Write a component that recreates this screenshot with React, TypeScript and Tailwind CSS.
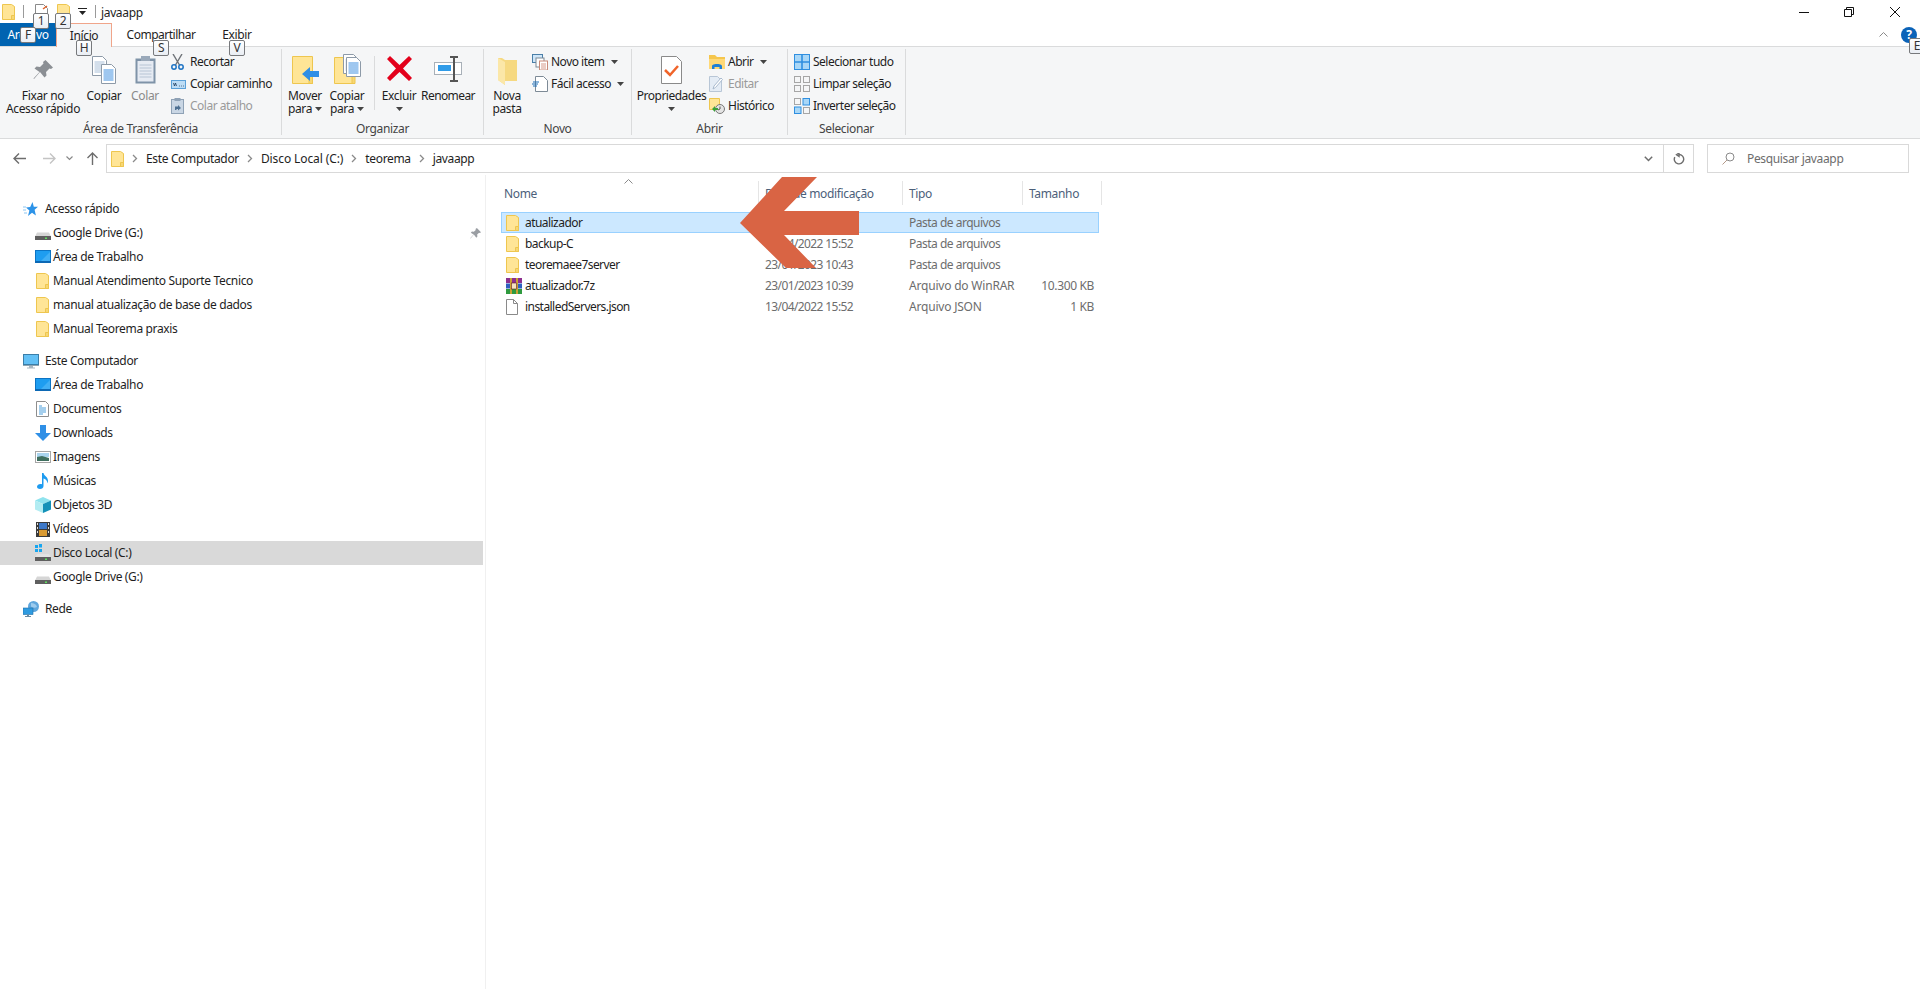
import React from 'react';

const FONT = "font-['Noto_Sans','Open_Sans',sans-serif]";

// icones desenhados a mao
const PastaPequena = ({ className = '' }: { className?: string }) => (
    <svg width="13" height="16" viewBox="0 0 13 16" className={className}>
        <path d="M.5.5h9l3 2v13H.5z" fill="#ffe596" stroke="#eec64f" />
        <path d="M9.5 11.5h3v4h-3z" fill="#f7d774" stroke="#eec64f" />
    </svg>
);

const Drive = () => (
    <svg width="16" height="16" viewBox="0 0 16 16">
        <path d="M2 7.5h12l2 4H0z" fill="#d6d6d6" />
        <rect x="0" y="11" width="16" height="4" fill="#5f5f5f" />
        <rect x="10" y="12.5" width="2" height="1.5" fill="#5fe05f" />
    </svg>
);

const DiscoC = () => (
    <svg width="16" height="18" viewBox="0 0 16 18">
        <path d="M0 1h3v3H0zM4 0h3v3.5H4zM0 5h3v3H0zM4 5h3v3H4z" fill="#18a6f0" />
        <path d="M2 10h12l2 3H0z" fill="#e3e3e3" />
        <rect x="0" y="13" width="16" height="4" fill="#5f5f5f" />
        <rect x="10" y="14.5" width="2" height="1.5" fill="#5fe05f" />
    </svg>
);

const AreaTrabalho = () => (
    <svg width="16" height="14" viewBox="0 0 16 14">
        <rect x=".5" y=".5" width="15" height="12" fill="#1e9df0" stroke="#0c74c4" />
        <rect x="0" y="11" width="16" height="2" fill="#0c68b4" />
        <path d="M6 11 15 2v9z" fill="#41aff5" />
    </svg>
);

const Documentos = () => (
    <svg width="13" height="16" viewBox="0 0 13 16">
        <path d="M.5.5h9l3 3v12H.5z" fill="#fff" stroke="#8e8e8e" />
        <path d="M3 5h3M3 7h7M3 9h7M3 11h7M3 13h4" stroke="#4a9edb" />
    </svg>
);

const Downloads = () => (
    <svg width="16" height="16" viewBox="0 0 16 16">
        <path d="M5 0h6v8h5l-8 8-8-8h5z" fill="#2f8fe6" />
    </svg>
);

const Imagens = () => (
    <svg width="16" height="12" viewBox="0 0 16 12">
        <rect x=".5" y=".5" width="15" height="11" fill="#fff" stroke="#a6a6a6" />
        <rect x="2" y="2" width="12" height="4" fill="#a9d4ee" />
        <path d="M2 6l5-1 7 2v3H2z" fill="#3f6f5f" />
    </svg>
);

const Musicas = () => (
    <svg width="12" height="16" viewBox="0 0 12 16">
        <path d="M5 0h1.500c.5 3 4.500 3.500 4.500 8 0 1-.3 1.700-.7 2.300.2-2.800-2-4.300-3.800-4.800V13c0 1.800-1.500 3-3.500 3C1.500 16 0 15.200 0 13.800 0 12.300 1.700 11 3.500 11c.6 0 1.100.1 1.500.3z" fill="#1d9bf0" />
    </svg>
);

const Objetos3D = () => (
    <svg width="16" height="16" viewBox="0 0 16 16">
        <path d="M8 0l8 3.500L8 7 0 3.500z" fill="#8fe3ee" />
        <path d="M0 3.500 8 7v9l-8-3.500z" fill="#b2ecf2" />
        <path d="M16 3.500 8 7v9l8-3.500z" fill="#1391b8" />
    </svg>
);

const Videos = () => (
    <svg width="14" height="15" viewBox="0 0 14 15">
        <rect width="14" height="15" fill="#3a3a3a" />
        <rect x="3" y="1" width="8" height="6" fill="#3d78c8" />
        <rect x="3" y="8" width="8" height="6" fill="#d99a32" />
        <path d="M1 1h1v2H1zM1 5h1v2H1zM1 9h1v2H1zM12 1h1v2h-1zM12 5h1v2h-1zM12 9h1v2h-1z" fill="#ddd" />
    </svg>
);

const Computador = () => (
    <svg width="16" height="15" viewBox="0 0 16 15">
        <rect x=".5" y=".5" width="15" height="10" fill="#63c0f5" stroke="#3b7ea8" />
        <path d="M0 11h16v1H0z" fill="#8da4b2" />
        <path d="M6 12h4v1.500H6zM4 13.500h8v1H4z" fill="#a9b8c2" />
    </svg>
);

const Rede = () => (
    <svg width="16" height="16" viewBox="0 0 16 16">
        <circle cx="10.500" cy="5.500" r="5.500" fill="#5fa6dc" />
        <path d="M8 2c3 0 5 1 6 4-2 1-4 1-6-.5z" fill="#9ccbee" />
        <rect x="0" y="7" width="10" height="6.500" fill="#2f9be0" stroke="#1d6fa8" strokeWidth=".6" />
        <path d="M4 13.500h2V15h2v1H2v-1h2z" fill="#6a8ba3" />
    </svg>
);

const Estrela = () => (
    <svg width="15" height="15" viewBox="0 0 15 15">
        <path d="M9.500 0l1.300 4.800H15l-3.400 3 1.300 5.700-3.900-2.700L5 14l1.400-5.600L3 5.500l4.200-.4z" fill="#2c93e8" />
        <path d="M0 5h3M0 8h3M1 11h3" stroke="#8cc6f2" />
    </svg>
);

const Alfinete = ({ size = 20, cor = '#8b8f94' }: { size?: number; cor?: string }) => (
    <svg width={size} height={size} viewBox="0 0 20 20">
        <path d="M12.500 0 20 7.500 18 9l-1.500-.5-3.500 3.500.5 3.500-2 2L7 12l-6 7-.5-.5 6-6.500L1.500 8.500l2-2 3.500.5L10.500 3.500 10 2z" fill={cor} />
    </svg>
);

const Documento = ({ x = 0, y = 0, linhas = '#4a90e2' }: { x?: number; y?: number; linhas?: string }) => (
    <g transform={`translate(${x} ${y})`}>
        <path d="M.5.500h10l4 4v15H.5z" fill="#fff" stroke="#8d9aa8" />
        <path d="M2.500 6h10M2.500 8h10M2.500 10h10M2.500 12h10M2.500 14h10M2.500 16h10" stroke={linhas} />
    </g>
);

const CopiarIcon = () => (
    <svg width="24" height="28" viewBox="0 0 24 28">
        <Documento x={0} y={0} linhas="#a8bfd8" />
        <Documento x={9} y={8} linhas="#3f8fe0" />
    </svg>
);

const ColarIcon = () => (
    <svg width="21" height="29" viewBox="0 0 21 29">
        <rect x=".5" y="3.500" width="20" height="25" fill="#7f93a8" />
        <rect x="2.500" y="6" width="16" height="20.500" fill="#e6ebf3" />
        <path d="M4.500 10h12M4.500 13h12M4.500 16h12M4.500 19h12M4.500 22h12" stroke="#b7c4d4" />
        <rect x="6" y="1" width="9" height="5" fill="#9aa9ba" />
    </svg>
);

const TesouraIcon = () => (
    <svg width="13" height="16" viewBox="0 0 13 16">
        <path d="M2 0l6.500 11M11 0 4.500 11" stroke="#6f7378" strokeWidth="1.400" fill="none" />
        <circle cx="3" cy="13" r="2.200" fill="none" stroke="#1d73c4" strokeWidth="1.500" />
        <circle cx="10" cy="13" r="2.200" fill="none" stroke="#1d73c4" strokeWidth="1.500" />
    </svg>
);

const CaminhoIcon = () => (
    <svg width="15" height="9" viewBox="0 0 15 9">
        <rect x=".5" y=".5" width="14" height="8" fill="#bcdcf5" stroke="#5aa0d8" />
        <path d="M2.500 3l1 3 1-3 1 3M8 6h.8M10 6h.8M12 6h.8" stroke="#1c3a5c" strokeWidth=".8" fill="none" />
    </svg>
);

const ColarAtalhoIcon = () => (
    <svg width="13" height="16" viewBox="0 0 13 16">
        <rect x=".5" y="1.500" width="12" height="14" fill="#c9d6e4" stroke="#8fa2b6" />
        <rect x="3.500" y="0" width="6" height="3" fill="#8fa2b6" />
        <path d="M4 12V8.500h3V7l3 3-3 2.500V11H5.500v1z" fill="#4d6f91" />
    </svg>
);

const MoverIcon = () => (
    <svg width="27" height="28" viewBox="0 0 27 28">
        <path d="M.5.500h20v27H.5z" fill="#ffe596" stroke="#eec64f" />
        <path d="M17 20h3.500v7.500H17z" fill="#f7d774" stroke="#eec64f" />
        <path d="M10 18l8-7v4h9v6h-9v4z" fill="#2f8fe6" />
    </svg>
);

const CopiarParaIcon = () => (
    <svg width="27" height="30" viewBox="0 0 27 30">
        <path d="M.5 3.500h20v26H.5z" fill="#ffe596" stroke="#eec64f" />
        <path d="M18 22h3v7.500h-3z" fill="#f7d774" stroke="#eec64f" />
        <Documento x={9} y={0} linhas="#a8bfd8" />
        <Documento x={12} y={3} linhas="#3f8fe0" />
    </svg>
);

const ExcluirIcon = () => (
    <svg width="25" height="25" viewBox="0 0 25 25">
        <path d="M3 0l9.500 9L22 0l3 3-9 9.500 9 9.500-3 3-9.500-9L3 25l-3-3 9-9.500L0 3z" fill="#e3001b" />
    </svg>
);

const RenomearIcon = () => (
    <svg width="28" height="26" viewBox="0 0 28 26">
        <rect x=".5" y="6.500" width="27" height="12" fill="#fff" stroke="#a8b0b8" />
        <rect x="4" y="9" width="13" height="6" fill="#2f9be8" />
        <path d="M16 1h8M16 25h8M20 1v24" stroke="#555" strokeWidth="2" fill="none" />
    </svg>
);

const NovaPastaIcon = () => (
    <svg width="19" height="27" viewBox="0 0 19 27">
        <path d="M0 0h4l3 2h12v21H7v4l-7-5z" fill="#f6d981" />
        <path d="M0 0l7 4v23l-7-5z" fill="#fbe7a8" />
    </svg>
);

const NovoItemIcon = () => (
    <svg width="16" height="16" viewBox="0 0 16 16">
        <rect x=".5" y=".5" width="10" height="8" fill="#cfe6f8" stroke="#4a7fa8" />
        <rect x="4" y="4" width="8" height="9" fill="#fff" stroke="#7d8a96" />
        <rect x="7.500" y="7" width="8" height="9" fill="#fff" stroke="#c98a78" />
        <path d="M9 10h5M9 12h5M9 14h5" stroke="#d79a8a" />
    </svg>
);

const FacilAcessoIcon = () => (
    <svg width="16" height="16" viewBox="0 0 16 16">
        <path d="M3.500.5h8l4 4v11h-12z" fill="#fff" stroke="#7d8a96" />
        <path d="M1 6h6M0 8h6M1 10h4" stroke="#1d6fb8" />
    </svg>
);

const PropriedadesIcon = () => (
    <svg width="21" height="28" viewBox="0 0 21 28">
        <path d="M.5.500h15l5 5v22H.5z" fill="#fff" stroke="#8a8a8a" />
        <path d="M4 14l5 5 8-9" stroke="#f0642a" strokeWidth="2.500" fill="none" />
    </svg>
);

const AbrirIcon = () => (
    <svg width="16" height="14" viewBox="0 0 16 14">
        <path d="M0 0h6l2 2h8v12H0z" fill="#f5c64d" />
        <rect x="0" y="4" width="16" height="10" fill="#ffd978" />
        <path d="M3 14v-2.500C3 10 4 9 8 9s5 1 5 2.500V14h-2.500v-2h-5v2z" fill="#1c7fd8" />
    </svg>
);

const EditarIcon = () => (
    <svg width="14" height="16" viewBox="0 0 14 16">
        <path d="M.5.500h8l4 4v11H.5z" fill="#e4ecf5" stroke="#b8c6d6" />
        <path d="M4 13l1-3 7-8 1.500 1.500-7 8z" fill="#fff" stroke="#a9bace" />
    </svg>
);

const HistoricoIcon = () => (
    <svg width="16" height="16" viewBox="0 0 16 16">
        <path d="M.5.500h10v11H.5z" fill="#ffe596" stroke="#eec64f" />
        <circle cx="11" cy="11" r="4.500" fill="#e4e4e4" stroke="#777" />
        <path d="M11 8.500V11l-2 1" stroke="#555" fill="none" />
        <path d="M3 11l3-3v2h3v2H6v2z" fill="#3aa03a" />
    </svg>
);

const SelecionarTudo = () => (
    <svg width="16" height="16" viewBox="0 0 16 16">
        <rect x=".5" y=".5" width="15" height="15" fill="#a9d7f7" stroke="#2f8fe0" />
        <path d="M8 0v16M0 8h16" stroke="#2f8fe0" strokeWidth="1.600" />
    </svg>
);

const LimparSelecao = () => (
    <svg width="16" height="16" viewBox="0 0 16 16" fill="none" stroke="#a6a6a6">
        <rect x=".5" y=".5" width="6" height="6" />
        <rect x="9.500" y=".5" width="6" height="6" />
        <rect x=".5" y="9.500" width="6" height="6" />
        <rect x="9.500" y="9.500" width="6" height="6" />
    </svg>
);

const InverterSelecao = () => (
    <svg width="16" height="16" viewBox="0 0 16 16" fill="none">
        <rect x=".5" y=".5" width="6" height="6" stroke="#a6a6a6" />
        <rect x="9" y=".5" width="6.500" height="6.500" fill="#a9d7f7" stroke="#2f8fe0" />
        <rect x=".5" y="9" width="6.500" height="6.500" fill="#a9d7f7" stroke="#2f8fe0" />
        <rect x="9.500" y="9.500" width="6" height="6" stroke="#a6a6a6" />
    </svg>
);

const WinRar = () => (
    <svg width="16" height="16" viewBox="0 0 16 16">
        <rect x="0" y="0" width="16" height="5" fill="#8c2f8f" />
        <rect x="0" y="5.500" width="16" height="5" fill="#2f5fc0" />
        <rect x="0" y="11" width="16" height="5" fill="#2f9a3f" />
        <path d="M4 0h2v16H4zM10 0h2v16h-2z" fill="#c9a233" />
        <rect x="5.500" y="5" width="5" height="6" fill="#f4e3c0" stroke="#6a1f1f" strokeWidth=".6" />
    </svg>
);

const ArquivoJson = () => (
    <svg width="12" height="16" viewBox="0 0 12 16">
        <path d="M.5.500h7l4 4v11H.5z" fill="#fff" stroke="#8a8a8a" />
        <path d="M7.500.500v4h4" fill="none" stroke="#8a8a8a" />
    </svg>
);

const Caret = ({ className = '' }: { className?: string }) => (
    <svg width="7" height="4" viewBox="0 0 7 4" className={className}>
        <path d="M0 0h7L3.500 4z" fill="#444" />
    </svg>
);

const Keytip = ({ letra, className }: { letra: string; className: string }) => (
    <div className={`absolute z-20 w-[16px] h-[16px] flex items-center justify-center bg-gradient-to-b from-white to-[#eaeef4] border border-[#77797c] rounded-[2px] text-[12px] leading-none text-[#333] ${className}`}>
        {letra}
    </div>
);

const BotaoGrande = ({ w, icone, linhas, seta, inativo, topo = 'pt-[7px]', texto = '' }: { w: string; icone: React.ReactNode; linhas: string[]; seta?: 'texto' | 'abaixo'; inativo?: boolean; topo?: string; texto?: string }) => (
    <div className={`${w} shrink-0 flex flex-col items-center`}>
        <div className={`h-[40px] ${topo}`}>{icone}</div>
        {linhas.map((l, i) => (
            <div key={l} className={`h-[13px] leading-[13px] flex items-center gap-[3px] whitespace-nowrap ${texto} ${inativo ? 'text-[#8a8a8a]' : ''}`}>
                {l}
                {seta === 'texto' && i === linhas.length - 1 && <Caret />}
            </div>
        ))}
        {seta === 'abaixo' && <div className="h-[13px] flex items-center"><Caret /></div>}
    </div>
);

const BotaoPequeno = ({ icone, texto, seta, inativo }: { icone: React.ReactNode; texto: string; seta?: boolean; inativo?: boolean }) => (
    <div className={`h-[22px] flex items-center tracking-[-0.5px] ${inativo ? 'text-[#9a9a9a]' : ''}`}>
        <div className="w-[19px] shrink-0 flex items-center">{icone}</div>
        <span className="whitespace-nowrap">{texto}</span>
        {seta && <Caret className="ml-[6px]" />}
    </div>
);

const Grupo = ({ w, pl, rotulo, children }: { w: string; pl?: string; rotulo: string; children: React.ReactNode }) => (
    <div className={`${w} shrink-0 h-[86px] border-r border-[#dadbdc] flex flex-col`}>
        <div className={`h-[71px] flex ${pl ?? ''}`}>{children}</div>
        <div className="h-[15px] pt-[1px] leading-[15px] text-center text-[#444]">{rotulo}</div>
    </div>
);

const Chevron = () => (
    <svg width="6" height="9" viewBox="0 0 6 9" className="mx-[8px]">
        <path d="M1 1l3.500 3.500L1 8" stroke="#8a8a8a" strokeWidth="1.300" fill="none" />
    </svg>
);

const LinhaNav = ({ icone, texto, sel, pin }: { icone: React.ReactNode; texto: string; sel?: boolean; pin?: boolean }) => (
    <div className={`h-[24px] w-[483px] flex items-center pr-[2px] ${sel ? 'bg-[#d9d9d9]' : ''}`}>
        <div className="w-[53px] pl-[32px] shrink-0 flex items-center justify-center">{icone}</div>
        <span className="flex-1">{texto}</span>
        {pin && <Alfinete size={11} cor="#9a9ea3" />}
    </div>
);

const CabecalhoNav = ({ icone, texto, className = '' }: { icone: React.ReactNode; texto: string; className?: string }) => (
    <div className={`h-[24px] flex items-center ${className}`}>
        <div className="w-[45px] pl-[23px] shrink-0 flex items-center">{icone}</div>
        <span>{texto}</span>
    </div>
);

const colunasTopo = 'grid grid-cols-[258px_144px_120px_79px]';
const colunasLinha = 'grid grid-cols-[258px_144px_120px_74px]';

const arquivos = [
    { nome: 'atualizador', data: '', tipo: 'Pasta de arquivos', tam: '', icone: <PastaPequena />, sel: true },
    { nome: 'backup-C', data: '13/04/2022 15:52', tipo: 'Pasta de arquivos', tam: '', icone: <PastaPequena /> },
    { nome: 'teoremaee7server', data: '23/01/2023 10:43', tipo: 'Pasta de arquivos', tam: '', icone: <PastaPequena /> },
    { nome: 'atualizador.7z', data: '23/01/2023 10:39', tipo: 'Arquivo do WinRAR', tam: '10.300 KB', icone: <WinRar /> },
    { nome: 'installedServers.json', data: '13/04/2022 15:52', tipo: 'Arquivo JSON', tam: '1 KB', icone: <ArquivoJson /> },
];

export default function App() {
    return (
        <div className={`relative w-[1920px] h-[989px] overflow-hidden bg-white text-[#1e1e1e] text-[12px] tracking-[-0.35px] ${FONT}`}>
            {/* Barra de titulo */}
            <div className="h-[23px] flex items-center">
                <PastaPequena className="ml-[2px]" />
                <div className="ml-[8px] w-px h-[13px] bg-[#9a9a9a]" />
                <svg width="13" height="15" viewBox="0 0 13 15" className="ml-[11px]">
                    <path d="M.5.500h8l4 4v10H.5z" fill="#fff" stroke="#8a8a8a" />
                    <path d="M8 5l4-3" stroke="#e0622a" strokeWidth="1.500" />
                </svg>
                <PastaPequena className="ml-[9px]" />
                <svg width="9" height="7" viewBox="0 0 9 7" className="ml-[8px]">
                    <path d="M0 0h9v1H0zM1 3h7L4.500 7z" fill="#222" />
                </svg>
                <div className="ml-[8px] w-px h-[13px] bg-[#9a9a9a]" />
                <span className="ml-[5px] pt-[2px]">javaapp</span>
                <div className="ml-auto flex items-center">
                    <svg width="10" height="10" viewBox="0 0 10 10" className="mr-[35px]"><path d="M0 5.500h10" stroke="#111" /></svg>
                    <svg width="10" height="10" viewBox="0 0 10 10" className="mr-[36px]"><path d="M.5 2.500h7v7h-7zM2.500 2.500v-2h7v7h-2" stroke="#111" fill="none" /></svg>
                    <svg width="10" height="10" viewBox="0 0 10 10" className="mr-[20px]"><path d="M0 0l10 10M10 0 0 10" stroke="#111" /></svg>
                </div>
            </div>

            {/* Abas */}
            <div className="h-[24px] border-b border-[#dadbdc] flex items-stretch relative">
                <div className="w-[56px] h-[23px] bg-[#0063b1] text-white flex items-center justify-center">Arquivo</div>
                <div className="w-[56px] h-[24px] -mb-px bg-[#f5f6f7] border border-b-0 border-[#f0a58a] flex items-center justify-center z-10">Início</div>
                <div className="w-[98px] flex items-center justify-center tracking-[-0.5px]">Compartilhar</div>
                <div className="ml-[10px] w-[34px] flex items-center justify-center">Exibir</div>
                <div className="ml-auto flex items-center pr-[3px]">
                    <svg width="9" height="5" viewBox="0 0 9 5" className="mr-[13px]"><path d="M.5 4.500l4-4 4 4" stroke="#8a8a8a" fill="none" /></svg>
                    <div className="w-[16px] h-[16px] rounded-full bg-[#0b63b8] text-white text-[12px] font-bold leading-[16px] text-center">?</div>
                </div>
            </div>

            {/* Ribbon */}
            <div className="h-[92px] bg-[#f5f6f7] border-b border-[#dadbdc] pt-[2px] flex">
                <Grupo w="w-[282px]" rotulo="Área de Transferência">
                    <BotaoGrande w="w-[86px]" topo="pt-[11px]" icone={<Alfinete />} linhas={['Fixar no', 'Acesso rápido']} />
                    <BotaoGrande w="w-[36px]" icone={<CopiarIcon />} linhas={['Copiar']} />
                    <BotaoGrande w="w-[46px]" topo="pt-[6px]" inativo icone={<ColarIcon />} linhas={['Colar']} />
                    <div className="ml-[3px] pt-[2px]">
                        <BotaoPequeno icone={<TesouraIcon />} texto="Recortar" />
                        <BotaoPequeno icone={<CaminhoIcon />} texto="Copiar caminho" />
                        <BotaoPequeno inativo icone={<ColarAtalhoIcon />} texto="Colar atalho" />
                    </div>
                </Grupo>
                <Grupo w="w-[202px]" rotulo="Organizar">
                    <BotaoGrande w="w-[46px]" icone={<MoverIcon />} linhas={['Mover', 'para']} seta="texto" />
                    <BotaoGrande w="w-[38px]" topo="pt-[5px]" icone={<CopiarParaIcon />} linhas={['Copiar', 'para']} seta="texto" />
                    <div className="ml-[8px] mt-[7px] h-[54px] w-px bg-[#dadbdc]" />
                    <BotaoGrande w="w-[48px]" icone={<ExcluirIcon />} linhas={['Excluir']} seta="abaixo" />
                    <BotaoGrande w="w-[50px]" texto="tracking-[-0.6px]" icone={<RenomearIcon />} linhas={['Renomear']} />
                </Grupo>
                <Grupo w="w-[148px]" rotulo="Novo">
                    <BotaoGrande w="w-[46px]" topo="pt-[9px]" icone={<NovaPastaIcon />} linhas={['Nova', 'pasta']} />
                    <div className="ml-[2px] pt-[2px]">
                        <BotaoPequeno icone={<NovoItemIcon />} texto="Novo item" seta />
                        <BotaoPequeno icone={<FacilAcessoIcon />} texto="Fácil acesso" seta />
                    </div>
                </Grupo>
                <Grupo w="w-[156px]" pl="pl-[2px]" rotulo="Abrir">
                    <BotaoGrande w="w-[75px]" texto="tracking-[-0.5px]" icone={<PropriedadesIcon />} linhas={['Propriedades']} seta="abaixo" />
                    <div className="pt-[2px]">
                        <BotaoPequeno icone={<AbrirIcon />} texto="Abrir" seta />
                        <BotaoPequeno inativo icone={<EditarIcon />} texto="Editar" />
                        <BotaoPequeno icone={<HistoricoIcon />} texto="Histórico" />
                    </div>
                </Grupo>
                <Grupo w="w-[118px]" pl="pl-[6px]" rotulo="Selecionar">
                    <div className="pt-[2px]">
                        <BotaoPequeno icone={<SelecionarTudo />} texto="Selecionar tudo" />
                        <BotaoPequeno icone={<LimparSelecao />} texto="Limpar seleção" />
                        <BotaoPequeno icone={<InverterSelecao />} texto="Inverter seleção" />
                    </div>
                </Grupo>
            </div>

            {/* Navegacao e busca */}
            <div className="h-[36px] pt-[5px] flex items-start">
                <div className="w-[106px] h-[29px] shrink-0 flex items-center">
                    <svg width="13" height="11" viewBox="0 0 13 11" className="ml-[13px]"><path d="M6 .5 1 5.500l5 5M1 5.500h12" stroke="#6d6d6d" strokeWidth="1.400" fill="none" /></svg>
                    <svg width="13" height="11" viewBox="0 0 13 11" className="ml-[17px]"><path d="M7 .5l5 5-5 5M12 5.500H0" stroke="#c4c4c4" strokeWidth="1.400" fill="none" /></svg>
                    <svg width="7" height="5" viewBox="0 0 7 5" className="ml-[10px]"><path d="M.5.5l3 3 3-3" stroke="#888" strokeWidth="1.200" fill="none" /></svg>
                    <svg width="11" height="13" viewBox="0 0 11 13" className="ml-[14px]"><path d="M.5 6l5-5 5 5M5.500 1v12" stroke="#6d6d6d" strokeWidth="1.400" fill="none" /></svg>
                </div>
                <div className="w-[1588px] h-[29px] shrink-0 border border-[#d9d9d9] flex items-center">
                    <PastaPequena className="ml-[4px]" />
                    <Chevron />
                    <span>Este Computador</span>
                    <Chevron />
                    <span className="tracking-[-0.1px]">Disco Local (C:)</span>
                    <Chevron />
                    <span>teorema</span>
                    <Chevron />
                    <span>javaapp</span>
                    <svg width="9" height="6" viewBox="0 0 9 6" className="ml-auto mr-[10px]"><path d="M.8.8l3.700 3.700L8.200.8" stroke="#6d6d6d" strokeWidth="1.500" fill="none" /></svg>
                    <div className="w-[30px] h-full border-l border-[#d9d9d9] flex items-center justify-center">
                        <svg width="12" height="12" viewBox="0 0 12 12"><path d="M6 1.500a4.700 4.700 0 1 1-4.200 2.600M6 0v3.500L3.500 1.800z" stroke="#6d6d6d" strokeWidth="1.400" fill="none" /></svg>
                    </div>
                </div>
                <div className="ml-[13px] w-[202px] h-[29px] shrink-0 border border-[#d9d9d9] flex items-center text-[#6d6d6d]">
                    <svg width="13" height="13" viewBox="0 0 13 13" className="ml-[14px]"><circle cx="8" cy="5" r="4" stroke="#8a8a8a" fill="none" /><path d="M5 8 .5 12.500" stroke="#b49a8a" /></svg>
                    <span className="ml-[12px]">Pesquisar javaapp</span>
                </div>
            </div>

            {/* Corpo */}
            <div className="h-[814px] flex">
                <div className="w-[486px] shrink-0 border-r border-[#f0f0f0] pt-[22px]">
                    <CabecalhoNav icone={<Estrela />} texto="Acesso rápido" />
                    <LinhaNav icone={<Drive />} texto="Google Drive (G:)" pin />
                    <LinhaNav icone={<AreaTrabalho />} texto="Área de Trabalho" />
                    <LinhaNav icone={<PastaPequena />} texto="Manual Atendimento Suporte Tecnico" />
                    <LinhaNav icone={<PastaPequena />} texto="manual atualização de base de dados" />
                    <LinhaNav icone={<PastaPequena />} texto="Manual Teorema praxis" />
                    <CabecalhoNav className="mt-[8px]" icone={<Computador />} texto="Este Computador" />
                    <LinhaNav icone={<AreaTrabalho />} texto="Área de Trabalho" />
                    <LinhaNav icone={<Documentos />} texto="Documentos" />
                    <LinhaNav icone={<Downloads />} texto="Downloads" />
                    <LinhaNav icone={<Imagens />} texto="Imagens" />
                    <LinhaNav icone={<Musicas />} texto="Músicas" />
                    <LinhaNav icone={<Objetos3D />} texto="Objetos 3D" />
                    <LinhaNav icone={<Videos />} texto="Vídeos" />
                    <LinhaNav icone={<DiscoC />} texto="Disco Local (C:)" sel />
                    <LinhaNav icone={<Drive />} texto="Google Drive (G:)" />
                    <CabecalhoNav className="mt-[8px]" icone={<Rede />} texto="Rede" />
                </div>
                <div className="flex-1 pl-[15px] pt-[6px]">
                    {/* cabecalho da lista */}
                    <div className={`${colunasTopo} h-[24px] text-[#4c607a] relative`}>
                        <div className="pl-[3px] pt-[2px] border-r border-[#e5e5e5] flex items-center">Nome</div>
                        <div className="pl-[6px] pt-[2px] border-r border-[#e5e5e5] flex items-center">Data de modificação</div>
                        <div className="pl-[6px] pt-[2px] border-r border-[#e5e5e5] flex items-center">Tipo</div>
                        <div className="pl-[6px] pt-[2px] border-r border-[#e5e5e5] flex items-center">Tamanho</div>
                        <svg width="9" height="5" viewBox="0 0 9 5" className="absolute left-[123px] -top-[2px]"><path d="M.5 4.500l4-4 4 4" stroke="#8a8a8a" fill="none" /></svg>
                    </div>
                    <div className="pt-[7px]">
                        {arquivos.map(a => (
                            <div key={a.nome} className={`${colunasLinha} h-[21px] w-[598px] border ${a.sel ? 'bg-[#cce8ff] border-[#99d1ff]' : 'border-transparent'}`}>
                                <div className="flex items-center tracking-[-0.55px]">
                                    <div className="w-[23px] pl-[4px] shrink-0 flex items-center">{a.icone}</div>
                                    {a.nome}
                                </div>
                                <div className="pl-[5px] flex items-center text-[#6d6d6d] tracking-[-0.6px]">{a.data}</div>
                                <div className={`pl-[5px] flex items-center text-[#6d6d6d] ${a.tipo.startsWith('Pasta') ? 'tracking-[-0.5px]' : 'tracking-[-0.2px]'}`}>{a.tipo}</div>
                                <div className="pr-[4px] flex items-center justify-end text-[#6d6d6d]">{a.tam}</div>
                            </div>
                        ))}
                    </div>
                </div>
            </div>

            {/* Keytips */}
            <Keytip letra="1" className="left-[33px] top-[13px]" />
            <Keytip letra="2" className="left-[55px] top-[13px]" />
            <Keytip letra="F" className="left-[20px] top-[27px]" />
            <Keytip letra="H" className="left-[76px] top-[40px]" />
            <Keytip letra="S" className="left-[153px] top-[40px]" />
            <Keytip letra="V" className="left-[229px] top-[40px]" />
            <Keytip letra="E" className="left-[1909px] top-[38px]" />

            {/* Seta de destaque */}
            <svg width="130" height="100" viewBox="0 0 130 100" className="absolute left-[735px] top-[175px]">
                <path d="M47 2h35L49 36h75v24H49l32 33H51L5 48z" fill="#d96444" />
            </svg>
        </div>
    );
}
